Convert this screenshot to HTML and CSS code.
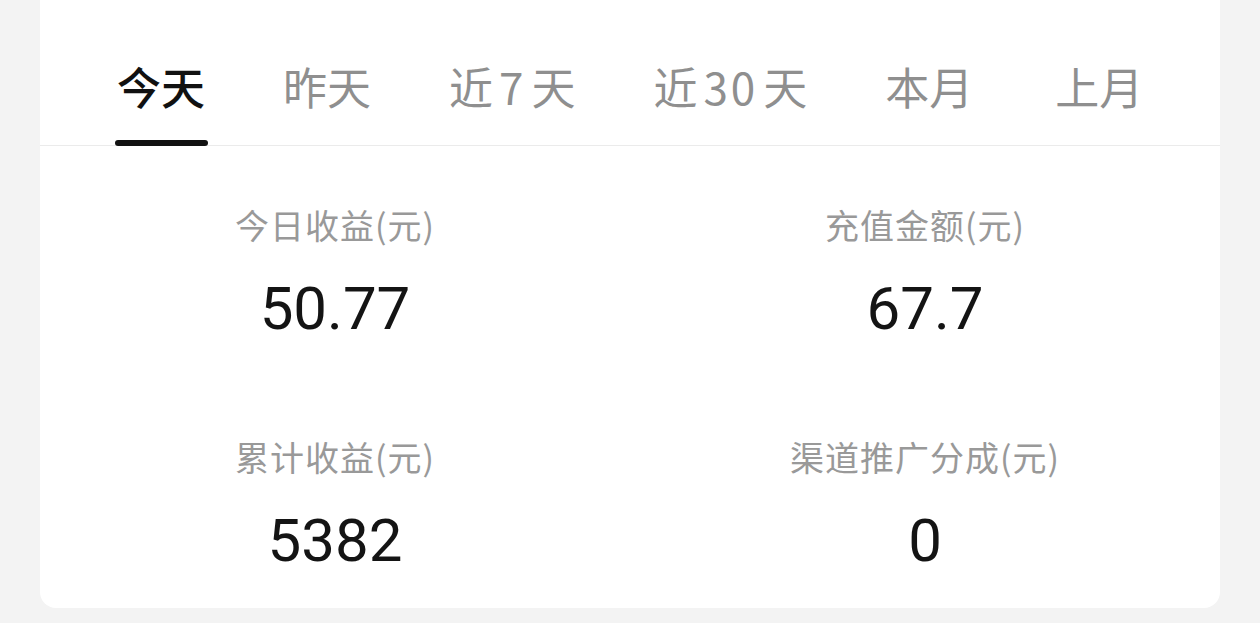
FILE: index.html
```html
<!DOCTYPE html>
<html lang="zh-CN">
<head>
<meta charset="utf-8">
<title>数据统计</title>
<link rel="stylesheet" href="styles.css">
</head>
<body>
<div class="card">
  <nav class="tabs">
    <div class="tab active">今天</div>
    <div class="tab">昨天</div>
    <div class="tab">近<span class="num">7</span>天</div>
    <div class="tab">近<span class="num">30</span>天</div>
    <div class="tab">本月</div>
    <div class="tab last">上月</div>
  </nav>
  <div class="stats">
    <div class="stat">
      <div class="label">今日收益(元)</div>
      <div class="value">50.77</div>
    </div>
    <div class="stat">
      <div class="label">充值金额(元)</div>
      <div class="value">67.7</div>
    </div>
    <div class="stat">
      <div class="label">累计收益(元)</div>
      <div class="value">5382</div>
    </div>
    <div class="stat">
      <div class="label">渠道推广分成(元)</div>
      <div class="value">0</div>
    </div>
  </div>
</div>
</body>
</html>
```

FILE: styles.css
```css
html, body {
  margin: 0;
  padding: 0;
}
body {
  background: #f3f3f3;
  font-family: "Noto Sans CJK SC", "Noto Sans", sans-serif;
  width: 1260px;
  height: 623px;
  overflow: hidden;
}
.card {
  margin: 0 40px;
  background: #ffffff;
  border-radius: 0 0 16px 16px;
}
.tabs {
  display: flex;
  gap: 78px;
  padding: 64px 0 0 77px;
  border-bottom: 1px solid #ebebeb;
}
.tab {
  position: relative;
  font-size: 44px;
  line-height: 44px;
  padding-bottom: 37px;
  color: #8f8f8f;
  white-space: nowrap;
}
.tab .num {
  margin: 0 5px 0 6px;
  letter-spacing: 3px;
}
.tab.last {
  margin-left: 4px;
}
.tab.active {
  color: #111111;
  font-weight: 500;
}
.tab.active::after {
  content: "";
  position: absolute;
  left: -2px;
  right: -3px;
  bottom: -1px;
  height: 6px;
  border-radius: 3px;
  background: #111111;
}
.stats {
  display: grid;
  grid-template-columns: 1fr 1fr;
  row-gap: 93px;
  padding: 59px 0 32px;
}
.stat {
  display: flex;
  flex-direction: column;
  align-items: center;
}
.label {
  font-size: 34px;
  line-height: 40px;
  letter-spacing: 1px;
  color: #999999;
  white-space: nowrap;
}
.value {
  margin-top: 29px;
  font-family: Roboto, "Noto Sans", sans-serif;
  font-size: 60px;
  line-height: 70px;
  color: #141414;
}
```
